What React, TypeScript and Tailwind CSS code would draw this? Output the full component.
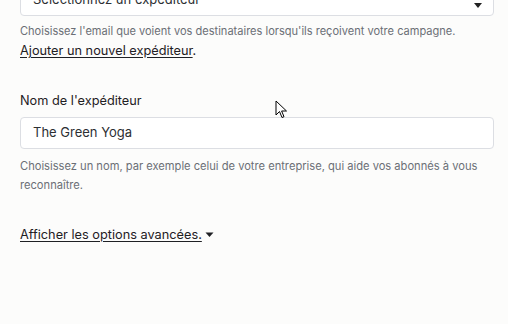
function Cursor() {
  return (
    <svg
      className="absolute left-[275px] top-[100px]"
      width="13"
      height="19"
      viewBox="0 0 13 19"
    >
      <path
        d="M1 1 L1 15 L4.5 11.5 L7 17.5 L9 16.7 L6.6 11 L11.5 11 Z"
        fill="#fff"
        stroke="#000"
        strokeWidth="1"
        strokeLinejoin="round"
      />
    </svg>
  );
}

export default function App() {
  return (
    <div className="relative w-[508px] h-[324px] overflow-hidden bg-[#fcfcfb] font-['Inter',sans-serif] text-[#1f2024]">
      <div className="pl-5 pr-[14px] -mt-[16px]">
        {/* sender email select */}
        <div className="flex items-center justify-between h-[32px] pl-[12px] pr-[10px] rounded border border-[#dcdee3] bg-white text-[13px] text-[#2d2f33]">
          <span>Sélectionnez un expéditeur</span>
          <svg width="10" height="6" viewBox="0 0 10 6" className="mt-[12px]">
            <path d="M1 0 L9 0 L5 5 Z" fill="#222" />
          </svg>
        </div>
        <p className="mt-[6px] text-[11.05px] leading-[19px] text-[#6b6f76]">
          Choisissez l'email que voient vos destinataires lorsqu'ils reçoivent votre campagne.
        </p>
        <p className="text-[12.75px] leading-[19px]">
          <a className="underline underline-offset-2">Ajouter un nouvel expéditeur</a>.
        </p>

        {/* sender name */}
        <label className="block mt-[32px] text-[12.75px] leading-[18px]">Nom de l'expéditeur</label>
        <div className="mt-[7px] flex items-center h-[32px] px-[12px] rounded border border-[#dcdee3] bg-white text-[13px] text-[#2d2f33]">
          The Green Yoga
        </div>
        <p className="mt-[8px] text-[11.15px] leading-[19px] text-[#6b6f76] pr-4">
          Choisissez un nom, par exemple celui de votre entreprise, qui aide vos abonnés à vous reconnaître.
        </p>

        <button className="mt-[31px] flex items-center gap-[3px] text-[12.75px] leading-[18px]">
          <span className="underline underline-offset-2">Afficher les options avancées.</span>
          <svg width="9" height="6" viewBox="0 0 9 6">
            <path d="M0.5 0.5 L8.5 0.5 L4.5 5 Z" fill="#1f2024" />
          </svg>
        </button>
      </div>
      <Cursor />
    </div>
  );
}
